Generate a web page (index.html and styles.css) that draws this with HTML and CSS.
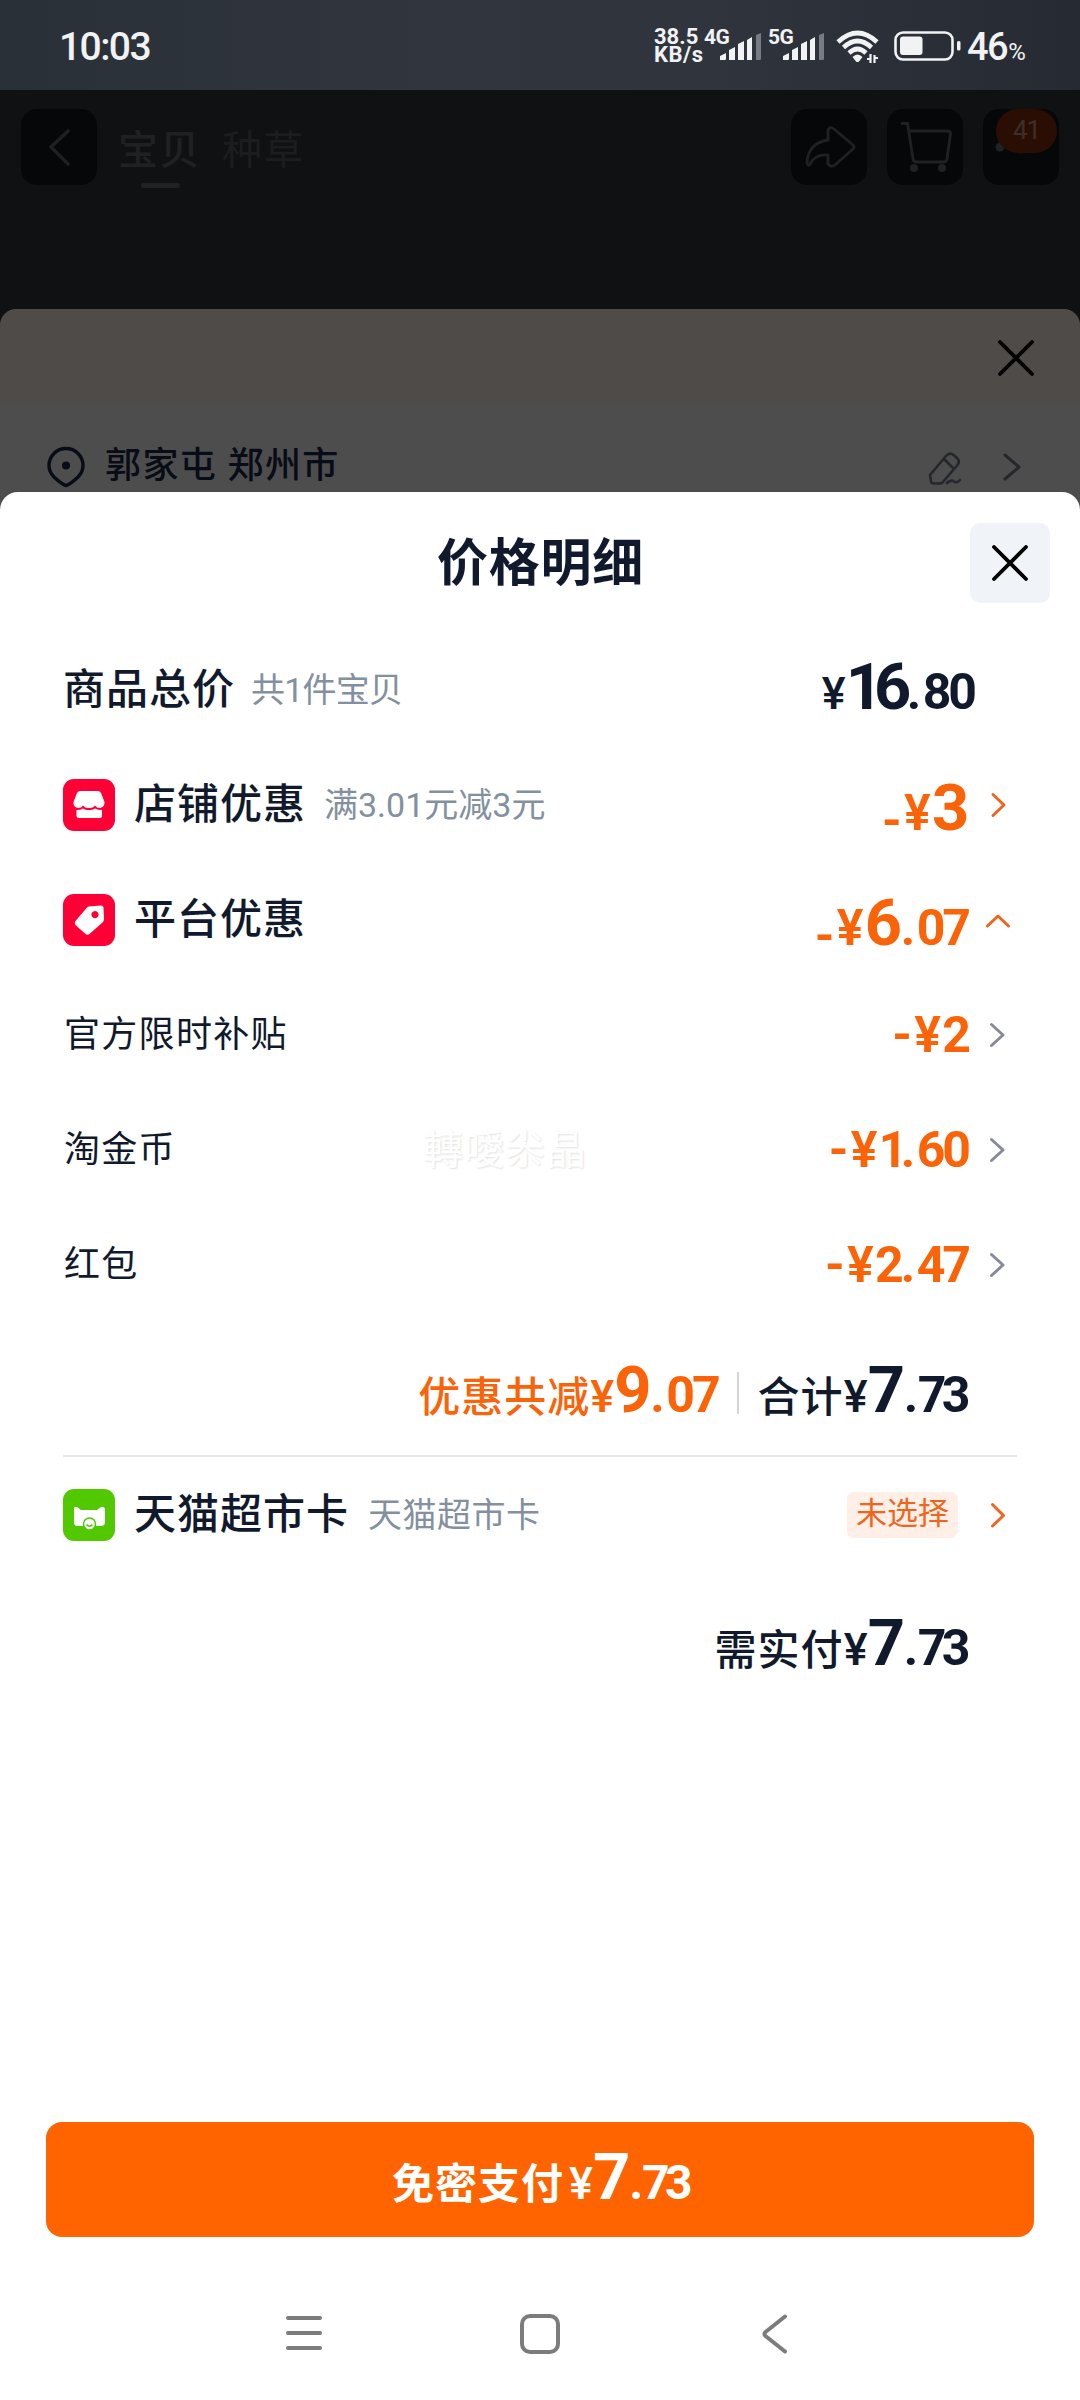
FILE: index.html
```html
<!DOCTYPE html>
<html lang="zh-CN">
<head>
<meta charset="utf-8">
<title>价格明细</title>
<link rel="stylesheet" href="styles.css">
</head>
<body>
<div class="screen">
  <div class="status">
    <span class="clock">10:03</span>
    <span class="speed"><span>38.5</span><span class="unit">KB/s</span></span>
    <span class="net">4G</span>
    <svg class="bars" width="43" height="28" viewBox="0 0 43 28" fill="#f1f2f3"><path d="M0 27v-4l6-3v6q0 1-1 1zM9 27V17l6-3v13zM18 27V11l6-3v19zM27 27V7l5-3v23z"/><path fill="#767b84" d="M36 27V2l5-2v26q0 1-1 1z"/></svg>
    <span class="net net5">5G</span>
    <svg class="bars" width="43" height="28" viewBox="0 0 43 28" fill="#f1f2f3"><path d="M0 27v-4l6-3v6q0 1-1 1zM9 27V17l6-3v13zM18 27V11l6-3v19zM27 27V7l5-3v23z"/><path fill="#767b84" d="M36 27V2l5-2v26q0 1-1 1z"/></svg>
    <svg class="wifi" width="44" height="34" viewBox="0 0 44 34" fill="none" stroke="#f1f2f3" stroke-width="4.6"><path d="M2 12q19.500-18 39 0M7.500 17.500q14-13 28 0M13 23q8.500-8 17 0"/><path fill="#f1f2f3" stroke="none" d="M16.500 27q5-5 10 0l-3.500 4.500q-1.500 1-3 0z"/><path stroke-width="2.200" d="M31 29h3.500V24M34.500 33v-9M38.500 33v-8M38.500 28H42"/></svg>
    <svg class="battery" width="68" height="30" viewBox="0 0 68 30"><rect x="1.500" y="1.500" width="57" height="27" rx="7.500" fill="none" stroke="#f1f2f3" stroke-width="2.600"/><rect x="6" y="5.500" width="22.500" height="18.500" rx="3" fill="#f1f2f3"/><rect x="63" y="10" width="3.500" height="9.500" rx="1.500" fill="#f1f2f3"/></svg>
    <span class="level">46</span><span class="pct">%</span>
  </div>

  <div class="topbar">
    <span class="tile"><svg width="76" height="76" viewBox="0 0 76 76" fill="none" stroke="#1f2022" stroke-width="3.500" stroke-linecap="round" stroke-linejoin="round"><path d="M47 22 30 38l17 17"/></svg></span>
    <span class="tab tab-on">宝贝</span>
    <span class="tab">种草</span>
    <span class="tile tile-share"><svg width="76" height="76" viewBox="0 0 76 76" fill="none" stroke="#202123" stroke-width="2.800" stroke-linejoin="round"><path d="M37 31V21q2-4 6-1l19 16q2 2 0 4L44 56q-4 3-7-1v-9q-13-1-18 9-2 3-3-1 1-20 21-23z"/></svg></span>
    <span class="tile"><svg width="76" height="76" viewBox="0 0 76 76" fill="none" stroke="#202123" stroke-width="2.800" stroke-linecap="round" stroke-linejoin="round"><path d="M15 14.500h5.500L26 50q.500 3 4 3h26q3.500 0 4-3l3.500-25q.500-3-3-3H22"/><g fill="#202123" stroke="none"><circle cx="27" cy="59" r="4"/><circle cx="55" cy="59" r="4"/></g></svg></span>
    <span class="tile"><svg width="76" height="76" viewBox="0 0 76 76" fill="#202123"><circle cx="17" cy="38" r="4.500"/><circle cx="38" cy="40" r="4.500"/></svg><span class="badge">41</span></span>
  </div>

  <div class="under">
    <div class="under-head"><svg width="36" height="36" viewBox="0 0 36 36" stroke="#000" stroke-width="3.800" stroke-linecap="round"><path d="M2 2l32 32M34 2 2 34"/></svg></div>
    <div class="address">
      <svg width="38" height="42" viewBox="0 0 38 42" fill="none" stroke="#070c16" stroke-width="3.400"><path d="M19 39.500Q15 38.500 7 31 2 26 2 19.500a17 17 0 0 1 34 0q0 6.500-5 11.500-8 7.500-12 8.500z"/><circle cx="19" cy="19.500" r="4" fill="#070c16" stroke="none"/></svg>
      <span class="place">郭家屯 郑州市</span>
      <svg class="edit" width="34" height="34" viewBox="0 0 34 34" fill="none" stroke="#25272c" stroke-width="2.600" stroke-linecap="round" stroke-linejoin="round"><path d="M2 24 18 5q3.500-4 7.500-1l3 2.500q4 3.500 1 7.500L14.500 31.500q-1 1-3 1H6q-3 0-3-2zM16.500 8.500l8 8M19 32q4-4 7-1.500 3 2 6-1.500"/></svg>
      <svg class="go" width="18" height="28" viewBox="0 0 18 28" fill="none" stroke="#25272c" stroke-width="3" stroke-linecap="round" stroke-linejoin="round"><path d="M2 2l14 12L2 26"/></svg>
    </div>
  </div>

  <div class="sheet">
    <div class="sheet-head">
      <h1>价格明细</h1>
      <span class="close"><svg width="36" height="36" viewBox="0 0 36 36" stroke="#000" stroke-width="3.800" stroke-linecap="round"><path d="M2 2l32 32M34 2 2 34"/></svg></span>
    </div>

    <div class="row">
      <span class="name">商品总价</span><span class="note note-count">共1件宝贝</span>
      <span class="price price-total"><span class="yen">¥</span><span class="int int-16">16</span><span class="dot">.</span><span class="dec">80</span></span>
    </div>
    <div class="row">
      <svg class="icon" width="52" height="52" viewBox="0 0 52 52"><rect width="52" height="52" rx="11" fill="#ff0036"/><path fill="#fff" d="M17 12h18q2 0 3 2l3.500 9q.500 5-4.500 6-3.500 0-5-2.500-2.500 3-6 2.500-3.500.500-6-2.500-1.500 2.500-5 2.500-5-1-4.500-6L14 14q1-2 3-2zM13.500 31q4 0 6.500-1.500 3 2 6 1.500 3 .500 6-1.500 2.500 1.500 7 1.500v6q0 2-2 2H15.500q-2 0-2-2z"/></svg>
      <span class="name">店铺优惠</span><span class="note note-shop">满3.01元减3元</span>
      <span class="price sale mixed"><span class="minus low">-</span><span class="yen big">¥</span><span class="int">3</span></span>
      <svg class="arrow" width="49" height="40" viewBox="0 0 49 40"><path d="M25 9.500 36 20 25 30.500"/></svg>
    </div>
    <div class="row">
      <svg class="icon" width="52" height="52" viewBox="0 0 52 52"><rect width="52" height="52" rx="11" fill="#ff0036"/><path fill="#fff" fill-rule="evenodd" d="M26 12.500 38 11.500q2.500 0 2.500 2.500L41 25q0 2-1.500 3.500L26.500 40q-2 1.500-4 0L12.500 31q-1.500-2 0-4L24 13.500q.800-.900 2-1zM32 17a3.600 3.600 0 1 0 .010 0z"/></svg>
      <span class="name">平台优惠</span>
      <span class="price sale mixed"><span class="minus low">-</span><span class="yen big">¥</span><span class="int">6</span><span class="dot">.</span><span class="dec">07</span></span>
      <svg class="arrow" width="49" height="40" viewBox="0 0 49 40"><path d="M19.500 26 30 16l10.500 10"/></svg>
    </div>
    <div class="row">
      <span class="sub">官方限时补贴</span>
      <span class="price sale flat"><span class="minus">-</span><span class="yen big">¥</span><span class="dec">2</span></span>
      <svg class="arrow gray" width="49" height="40" viewBox="0 0 49 40"><path d="M23.500 9.500 35 20 23.500 30.500"/></svg>
    </div>
    <div class="row">
      <span class="sub">淘金币</span><span class="mark">轉噯尜晶</span>
      <span class="price sale flat"><span class="minus">-</span><span class="yen big">¥</span><span class="dec one">1</span><span class="dot">.</span><span class="dec">60</span></span>
      <svg class="arrow gray" width="49" height="40" viewBox="0 0 49 40"><path d="M23.500 9.500 35 20 23.500 30.500"/></svg>
    </div>
    <div class="row">
      <span class="sub">红包</span>
      <span class="price sale flat"><span class="minus">-</span><span class="yen big">¥</span><span class="dec">2</span><span class="dot">.</span><span class="dec">47</span></span>
      <svg class="arrow gray" width="49" height="40" viewBox="0 0 49 40"><path d="M23.500 9.500 35 20 23.500 30.500"/></svg>
    </div>

    <div class="sum">
      <span class="price sale"><span class="word">优惠共减</span><span class="yen">¥</span><span class="int">9</span><span class="dot">.</span><span class="dec">07</span></span>
      <span class="bar"></span>
      <span class="price tight"><span class="word">合计</span><span class="yen">¥</span><span class="int">7</span><span class="dot">.</span><span class="dec">73</span></span>
    </div>

    <div class="row card">
      <svg class="icon" width="52" height="52" viewBox="0 0 52 52"><rect width="52" height="52" rx="11" fill="#52c800"/><path fill="#fff" d="M11 20q0-3 3-2l4 3h16l4-3q3-1 4 2v13q0 4-4 4H14q-3 0-3-4z"/><circle cx="26.500" cy="35" r="6" fill="#fff" stroke="#52c800" stroke-width="1.500"/><path d="M23.500 35.500q3 3.500 6 0" fill="none" stroke="#52c800" stroke-width="1.500"/></svg>
      <span class="name">天猫超市卡</span><span class="note note-card">天猫超市卡</span>
      <span class="chip">未选择</span>
      <svg class="arrow" width="49" height="40" viewBox="0 0 49 40"><path d="M24.500 9.500 35.500 20.500 24.500 31"/></svg>
    </div>

    <div class="sum due">
      <span class="price tight"><span class="word">需实付</span><span class="yen">¥</span><span class="int">7</span><span class="dot">.</span><span class="dec">73</span></span>
    </div>

    <div class="pay"><span class="price tight"><span class="word">免密支付</span><span class="yen">¥</span><span class="int">7</span><span class="dot">.</span><span class="dec">73</span></span></div>

    <div class="nav">
      <svg width="40" height="40" viewBox="0 0 40 40" stroke="#7c7c7c" stroke-width="4" stroke-linecap="round"><path d="M3 4h32M3 19h32M3 34h32"/></svg>
      <svg width="40" height="40" viewBox="0 0 40 40" fill="none" stroke="#7c7c7c" stroke-width="4"><rect x="2" y="2" width="36" height="36" rx="8"/></svg>
      <svg width="40" height="40" viewBox="0 0 40 40" fill="none" stroke="#7c7c7c" stroke-width="4" stroke-linecap="round" stroke-linejoin="round"><path d="M30 2.500 10.500 18q-2 2 0 4L30 37.500"/></svg>
    </div>
  </div>
</div>
</body>
</html>
```
FILE: styles.css
```css
* { box-sizing: border-box; }
body { margin: 0; font-family: Roboto, "Noto Sans CJK SC", sans-serif; color: #111a2c; background: #101113; }
svg { display: block; flex: none; }
.screen { width: 1080px; height: 2400px; display: flex; flex-direction: column; overflow: hidden; background: #101113; }

/* status bar */
.status { height: 90px; flex: none; display: flex; align-items: flex-start; color: #f1f2f3; background: linear-gradient(90deg, #2a3038, #30353e 40%, #2f343d 65%, #262b33); white-space: nowrap; line-height: 1; }
.clock { width: 595px; padding: 28px 0 0 59px; font-size: 39px; font-weight: 500; letter-spacing: -1.600px; }
.speed { width: 50px; margin: 28px 0 0 59px; display: flex; flex-direction: column; gap: 1px; font-size: 22px; line-height: 17px; font-weight: 700; }
.unit { letter-spacing: 0.500px; }
.net { width: 16px; margin-top: 27px; font-size: 21px; font-weight: 700; letter-spacing: -0.5px; }
.net5 { margin-left: 5px; width: 15px; }
.bars { margin-top: 33px; }
.wifi { margin: 30px 0 0 10px; }
.battery { margin: 31px 0 0 14px; }
.level { margin: 28px 0 0 5px; font-size: 38px; font-weight: 500; letter-spacing: -1.500px; }
.pct { margin: 40px 0 0 1px; font-size: 24px; }

/* dimmed product page header */
.topbar { height: 219px; flex: none; padding: 19px 21px 0; display: flex; align-items: flex-start; }
.tile { position: relative; width: 76px; height: 76px; margin-right: 20px; border-radius: 16px; background: #060709; }
.tile:last-child { margin-right: 0; }
.tile-share { margin-left: auto; }
.tab { margin: 14px 0 0 2px; font-size: 40px; line-height: 56px; letter-spacing: 1.500px; color: #1c1d1f; }
.tab-on { margin: 14px 19px 0 1px; font-weight: 500; color: #202123; }
.tab-on::after { content: ""; display: block; width: 39px; height: 5px; margin: 4px 0 0 23px; border-radius: 3px; background: #202123; }
.badge { position: absolute; left: 13px; top: 0; width: 61px; height: 44px; border-radius: 22px; background: #2b0e03; color: #3d2e29; font-size: 26px; line-height: 43px; text-align: center; letter-spacing: -1px; }

/* dimmed lower sheet */
.under { height: 201px; flex: none; border-radius: 16px 16px 0 0; background: linear-gradient(#4f4b49 96px, #4d4d4d 98px); }
.under-head { height: 96px; padding: 31px 46px 0 0; display: flex; justify-content: flex-end; }
.address { display: flex; padding: 41px 59px 0 47px; }
.place { margin: -2px 0 0 20px; font-size: 36px; line-height: 44px; font-weight: 500; letter-spacing: 1.400px; color: #070c16; white-space: nowrap; }
.edit { margin: 5px 0 0 auto; }
.go { margin: 7px 0 0 41px; }

/* price detail sheet */
.sheet { flex: 1; margin-top: -18px; border-radius: 18px 18px 0 0; background: #fff; display: flex; flex-direction: column; }
.sheet-head { height: 140px; display: flex; align-items: flex-start; padding: 31px 30px 0 0; }
h1 { flex: 1; margin: 1px 0 0 111px; font-size: 51px; line-height: 80px; font-weight: 700; text-align: center; letter-spacing: 0.700px; }
.close { width: 80px; height: 80px; border-radius: 10px; background: #f0f4f8; display: flex; align-items: center; justify-content: center; }
.row { height: 115px; padding: 0 63px; display: flex; align-items: center; white-space: nowrap; }
.icon { margin-right: 19px; }
.name { font-size: 42px; font-weight: 500; letter-spacing: 1px; line-height: 60px; }
.note { font-size: 34px; color: #8390a0; line-height: 50px; margin-left: 18px; }
.note-count { margin-left: 16px; letter-spacing: -0.800px; }
.note-card { margin-left: 19px; letter-spacing: 0.500px; }
.sub { margin-left: 1px; padding-top: 1px; font-size: 36px; letter-spacing: 1.300px; line-height: 54px; }
.price { margin-left: auto; height: 60px; display: flex; align-items: baseline; font-weight: 700; line-height: 60px; }
.sale { color: #fa6308; }
.mixed { margin-top: 6px; }
.yen { font-size: 45px; width: 24px; font-weight: 500; letter-spacing: -2px; }
.yen.big { font-size: 50px; width: 28px; font-weight: 600; letter-spacing: 0; }
.int { font-size: 65px; width: 36px; }
.int-16 { width: 61px; letter-spacing: -9px; }
.dot { font-size: 50px; width: 16px; }
.dec { font-size: 50px; letter-spacing: -3px; }
.tight .dot { width: 14px; }
.tight .dec { letter-spacing: -4.500px; }
.one { width: 22px; }
.minus { font-size: 50px; width: 22px; }
.low { position: relative; top: 8px; }
.word { font-size: 42px; font-weight: 500; letter-spacing: 1px; }
.price-total { margin-right: 43px; margin-top: -6px; }
.arrow { fill: none; stroke: #f0641e; stroke-width: 3; stroke-linecap: round; stroke-linejoin: round; }
.gray { stroke: #85899a; }
.mark { margin: -5px 0 0 247px; font-size: 40px; letter-spacing: 1px; color: #fff; text-shadow: 1px 1px 2px #e0e0e0; }
.sum { height: 135px; margin: 0 63px; padding: 3px 51px 0 0; border-bottom: 2px solid #e8e8e8; display: flex; align-items: center; justify-content: flex-end; }
.sum .price { margin-left: 0; }
.bar { width: 2px; height: 42px; margin: 6px 19px 0; background: #d5d5d8; }
.card { height: 116px; }
.chip { margin-left: auto; margin-right: 10px; width: 111px; height: 46px; border-radius: 7px; background: #ffefe6; color: #f0641e; font-size: 31px; line-height: 43px; text-align: center; }
.due { border: 0; height: 145px; padding: 0 51px 5px 0; }
.pay { height: 115px; margin: auto 46px 0; padding: 0 0 5px; border-radius: 16px; background: #ff6400; color: #fff; display: flex; align-items: center; justify-content: center; }
.pay .price { margin: 0; }
.pay .word { font-weight: 700; margin-right: 5px; }
.pay .dec { font-size: 48px; }
.pay .dot { width: 13px; }
.nav { height: 163px; padding: 77px 285px 0; display: flex; align-items: flex-start; justify-content: space-between; }
```
